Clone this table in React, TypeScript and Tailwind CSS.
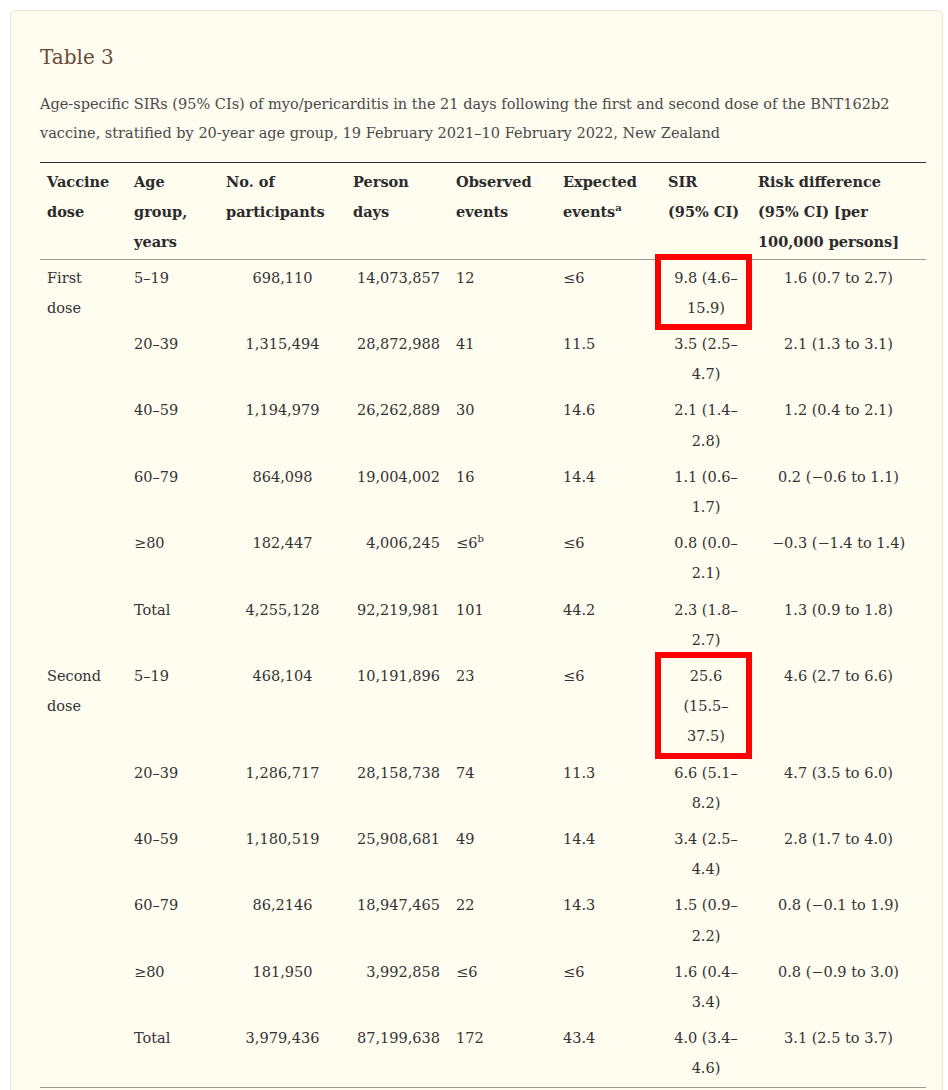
const rows: {
  dose?: string
  doseSpan?: number
  age: string
  n: string
  days: string
  obs: React.ReactNode
  exp: string
  sir: string[]
  risk: string
  mark?: boolean
}[] = [
  { dose: "First dose", doseSpan: 6, age: "5–19", n: "698,110", days: "14,073,857", obs: "12", exp: "≤6", sir: ["9.8 (4.6–", "15.9)"], risk: "1.6 (0.7 to 2.7)", mark: true },
  { age: "20–39", n: "1,315,494", days: "28,872,988", obs: "41", exp: "11.5", sir: ["3.5 (2.5–", "4.7)"], risk: "2.1 (1.3 to 3.1)" },
  { age: "40–59", n: "1,194,979", days: "26,262,889", obs: "30", exp: "14.6", sir: ["2.1 (1.4–", "2.8)"], risk: "1.2 (0.4 to 2.1)" },
  { age: "60–79", n: "864,098", days: "19,004,002", obs: "16", exp: "14.4", sir: ["1.1 (0.6–", "1.7)"], risk: "0.2 (−0.6 to 1.1)" },
  { age: "≥80", n: "182,447", days: "4,006,245", obs: <>≤6<span className="relative -top-[6px] text-[10px] leading-none">b</span></>, exp: "≤6", sir: ["0.8 (0.0–", "2.1)"], risk: "−0.3 (−1.4 to 1.4)" },
  { age: "Total", n: "4,255,128", days: "92,219,981", obs: "101", exp: "44.2", sir: ["2.3 (1.8–", "2.7)"], risk: "1.3 (0.9 to 1.8)" },
  { dose: "Second dose", doseSpan: 6, age: "5–19", n: "468,104", days: "10,191,896", obs: "23", exp: "≤6", sir: ["25.6", "(15.5–", "37.5)"], risk: "4.6 (2.7 to 6.6)", mark: true },
  { age: "20–39", n: "1,286,717", days: "28,158,738", obs: "74", exp: "11.3", sir: ["6.6 (5.1–", "8.2)"], risk: "4.7 (3.5 to 6.0)" },
  { age: "40–59", n: "1,180,519", days: "25,908,681", obs: "49", exp: "14.4", sir: ["3.4 (2.5–", "4.4)"], risk: "2.8 (1.7 to 4.0)" },
  { age: "60–79", n: "86,2146", days: "18,947,465", obs: "22", exp: "14.3", sir: ["1.5 (0.9–", "2.2)"], risk: "0.8 (−0.1 to 1.9)" },
  { age: "≥80", n: "181,950", days: "3,992,858", obs: "≤6", exp: "≤6", sir: ["1.6 (0.4–", "3.4)"], risk: "0.8 (−0.9 to 3.0)" },
  { age: "Total", n: "3,979,436", days: "87,199,638", obs: "172", exp: "43.4", sir: ["4.0 (3.4–", "4.6)"], risk: "3.1 (2.5 to 3.7)" },
]

export default function App() {
  return (
    <div className="min-h-screen bg-white pt-[10px] pl-[10px] pr-[5px] font-['DejaVu_Serif',serif]">
      <div className="rounded-md border border-[#e9e3d6] bg-[#fffcf0] pl-[29px] pr-[16px] pt-[30px] pb-10">
        <h3 className="text-[20px] leading-8 text-[#6b4a38]">Table 3</h3>
        <p className="mt-[17px] text-[14.5px] leading-[29px] text-[#4a4a4a]">
          Age-specific SIRs (95% CIs) of myo/pericarditis in the 21 days following the first and second dose of the BNT162b2 vaccine, stratified by 20-year age group, 19 February 2021–10 February 2022, New Zealand
        </p>

        <table className="mt-[14px] w-[886px] table-fixed border-collapse text-[14.5px] leading-[30.2px] text-[#333]">
          <colgroup>
            <col className="w-[87px]" />
            <col className="w-[92px]" />
            <col className="w-[127px]" />
            <col className="w-[103px]" />
            <col className="w-[107px]" />
            <col className="w-[105px]" />
            <col className="w-[90px]" />
            <col className="w-[175px]" />
          </colgroup>
          <thead>
            <tr className="border-t-[1.5px] border-b border-t-[#333] border-b-[#9a9a8e] align-top text-left text-[#2b2b2b]">
              <th className="px-[7px] pt-[4px] pb-[1px] font-bold">Vaccine dose</th>
              <th className="px-[7px] pt-[4px] pb-[1px] font-bold">Age group, years</th>
              <th className="px-[7px] pt-[4px] pb-[1px] font-bold">No. of participants</th>
              <th className="px-[7px] pt-[4px] pb-[1px] font-bold">Person days</th>
              <th className="px-[7px] pt-[4px] pb-[1px] font-bold">Observed events</th>
              <th className="px-[7px] pt-[4px] pb-[1px] font-bold">
                Expected events<span className="relative -top-[6px] text-[10px] leading-none">a</span>
              </th>
              <th className="px-[7px] pt-[4px] pb-[1px] font-bold">
                <div>SIR</div>
                <div className="whitespace-nowrap">(95% CI)</div>
              </th>
              <th className="px-[7px] pt-[4px] pb-[1px] font-bold">Risk difference (95% CI) [per 100,000 persons]</th>
            </tr>
          </thead>
          <tbody className="border-b border-b-[#9a9a8e]">
            {rows.map((r, i) => (
              <tr key={i} className="align-top">
                {r.dose && (
                  <td rowSpan={r.doseSpan} className="px-[7px] pt-[3px] pb-[3px]">
                    {r.dose}
                  </td>
                )}
                <td className="px-[7px] pt-[3px] pb-[3px]">{r.age}</td>
                <td className="px-[7px] pt-[3px] pb-[3px] text-center">{r.n}</td>
                <td className="pl-[7px] pr-[9px] pt-[3px] pb-[3px] text-right">{r.days}</td>
                <td className="px-[7px] pt-[3px] pb-[3px]">{r.obs}</td>
                <td className="px-[7px] pt-[3px] pb-[3px]">{r.exp}</td>
                <td className="relative px-[7px] pt-[3px] pb-[3px] text-center">
                  {r.sir.map((s, j) => (
                    <div key={j}>{s}</div>
                  ))}
                  {r.mark && (
                    <div className="pointer-events-none absolute -top-[6px] -bottom-[4px] -left-[6px] -right-[1px] border-[6px] border-[#ff0000]" />
                  )}
                </td>
                <td className="px-[7px] pt-[3px] pb-[3px] text-center">{r.risk}</td>
              </tr>
            ))}
          </tbody>
        </table>
      </div>
    </div>
  )
}
